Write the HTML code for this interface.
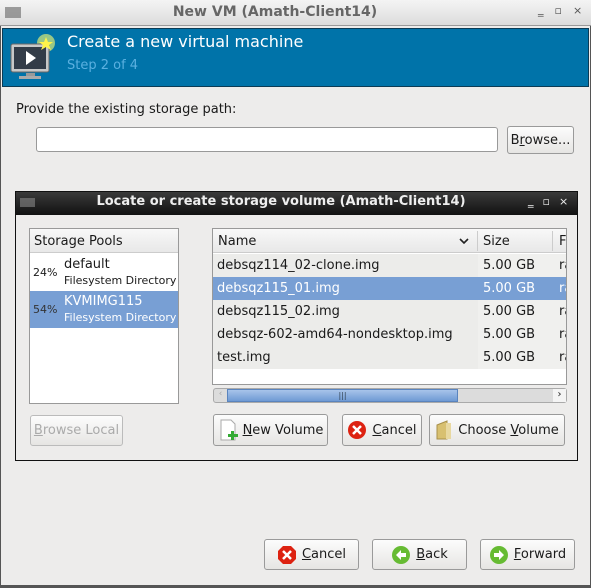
<!DOCTYPE html>
<html><head><meta charset="utf-8"><style>
*{box-sizing:border-box;margin:0;padding:0}
body{width:591px;height:588px;background:#edeceb;font-family:"DejaVu Sans","Liberation Sans",sans-serif;font-size:13px;color:#1a1a1a;position:relative;overflow:hidden}
.a{position:absolute}
.btn{position:absolute;border:1px solid #9a9a9a;border-radius:3px;background:linear-gradient(#fcfcfc,#e6e5e3);display:flex;align-items:center;justify-content:center;gap:5px;font-size:13px}
.btn u{text-decoration:underline}
.row{position:absolute;left:0;right:0;height:23px;line-height:23px}
</style></head><body>
<div class="a" style="left:0;top:0;width:591px;height:588px;border:1px solid #555;border-top:none"></div>
<div class="a" style="left:0;top:0;width:591px;height:26px;background:linear-gradient(#f4f4f4,#dcdcdc);border-bottom:1px solid #999"></div>
<div class="a" style="left:5px;top:7px;width:16px;height:11px;background:#777;opacity:.7"></div>
<div class="a" style="left:0;width:550px;top:4px;text-align:center;font-weight:bold;font-size:14px;color:#666">New VM (Amath-Client14)</div>
<div class="a" style="left:538px;top:4px;font-size:11px;color:#555;letter-spacing:11px">‗▫×</div>
<div class="a" style="left:2px;top:28px;width:587px;height:59px;background:#0073a9;border:1px solid #0b3b55"></div>
<svg class="a" style="left:8px;top:33px" width="48" height="52" viewBox="0 0 48 52">
<circle cx="38" cy="10" r="9" fill="#ffff70" opacity=".6"/>
<rect x="3" y="11" width="38" height="28" rx="2" fill="#c8c8c8" stroke="#666"/>
<rect x="6" y="14" width="32" height="22" fill="#333c48"/>
<path d="M18 18 L28 25 L18 32Z" fill="#fff"/>
<rect x="18" y="40" width="9" height="3" fill="#999"/><rect x="11" y="43" width="22" height="3" fill="#aaa"/>
<path d="M38 4 l2 5 5 0 -4 3 2 5 -5 -3 -5 3 2 -5 -4 -3 5 0z" fill="#fff34a"/>
</svg>
<div class="a" style="left:67px;top:32px;font-size:16px;color:#fff">Create a new virtual machine</div>
<div class="a" style="left:67px;top:58px;font-size:13px;color:#5ab0e0">Step 2 of 4</div>
<div class="a" style="left:16px;top:102px">Provide the existing storage path:</div>
<div class="a" style="left:36px;top:127px;width:462px;height:25px;background:#fff;border:1px solid #999;border-radius:3px"></div>
<div class="btn" style="left:507px;top:126px;width:67px;height:28px"><span>B<u>r</u>owse...</span></div>

<div class="a" style="left:15px;top:191px;width:563px;height:270px;border:1px solid #111;background:#edeceb"></div>
<div class="a" style="left:16px;top:192px;width:561px;height:23px;background:linear-gradient(#3a3a3a,#111)"></div>
<div class="a" style="left:20px;top:198px;width:15px;height:9px;background:#888;opacity:.6"></div>
<div class="a" style="left:16px;width:530px;top:194px;text-align:center;font-weight:bold;font-size:13px;color:#eee">Locate or create storage volume (Amath-Client14)</div>
<div class="a" style="left:528px;top:195px;font-size:11px;color:#eee;letter-spacing:9px">‗▫×</div>

<div class="a" style="left:29px;top:228px;width:150px;height:176px;background:#fff;border:1px solid #999">
 <div class="a" style="left:0;top:0;width:148px;height:24px;background:linear-gradient(#f8f8f8,#e8e8e8);border-bottom:1px solid #ccc;padding:5px 0 0 4px">Storage Pools</div>
 <div class="a" style="left:0;top:25px;width:148px;height:37px">
  <div class="a" style="left:3px;top:12px;font-size:11px">24%</div>
  <div class="a" style="left:34px;top:3px">default</div>
  <div class="a" style="left:34px;top:20px;font-size:11px">Filesystem Directory</div></div>
 <div class="a" style="left:0;top:62px;width:148px;height:37px;background:#789fd4;color:#fff">
  <div class="a" style="left:3px;top:12px;font-size:11px;color:#333">54%</div>
  <div class="a" style="left:34px;top:3px">KVMIMG115</div>
  <div class="a" style="left:34px;top:20px;font-size:11px">Filesystem Directory</div></div>
</div>

<div class="a" style="left:212px;top:228px;width:355px;height:157px;background:#fff;border:1px solid #999;overflow:hidden">
 <div class="a" style="left:0;top:0;width:355px;height:24px;background:linear-gradient(#f8f8f8,#e8e8e8);border-bottom:1px solid #ccc"></div>
 <div class="a" style="left:5px;top:5px">Name</div>
 <svg class="a" style="left:246px;top:8px" width="10" height="8"><path d="M1 2l4 4 4-4" fill="none" stroke="#222" stroke-width="1.6"/></svg>
 <div class="a" style="left:264px;top:2px;width:1px;height:20px;background:#ccc"></div>
 <div class="a" style="left:270px;top:5px">Size</div>
 <div class="a" style="left:339px;top:2px;width:1px;height:20px;background:#ccc"></div>
 <div class="a" style="left:346px;top:5px">F</div>
 <div class="a" style="left:0;top:25px;width:355px;height:115px;background:#f0f0ee"></div>
 <div class="a" style="left:0;top:25px;width:265px;height:115px;background:#ececea"></div>
 <div class="row" style="top:25px"><span class="a" style="left:4px">debsqz114_02-clone.img</span><span class="a" style="left:270px">5.00 GB</span><span class="a" style="left:346px">ra</span></div>
 <div class="row" style="top:48px;background:#789fd4;color:#fff"><span class="a" style="left:4px">debsqz115_01.img</span><span class="a" style="left:270px">5.00 GB</span><span class="a" style="left:346px">ra</span></div>
 <div class="row" style="top:71px"><span class="a" style="left:4px">debsqz115_02.img</span><span class="a" style="left:270px">5.00 GB</span><span class="a" style="left:346px">ra</span></div>
 <div class="row" style="top:94px"><span class="a" style="left:4px">debsqz-602-amd64-nondesktop.img</span><span class="a" style="left:270px">5.00 GB</span><span class="a" style="left:346px">ra</span></div>
 <div class="row" style="top:117px"><span class="a" style="left:4px">test.img</span><span class="a" style="left:270px">5.00 GB</span><span class="a" style="left:346px">ra</span></div>
</div>
<div class="a" style="left:213px;top:388px;width:354px;height:15px;background:#dcdcdc;border:1px solid #aaa;border-radius:3px"></div>
<div class="a" style="left:227px;top:389px;width:231px;height:13px;background:linear-gradient(#a8c4ea,#6f9ad4);border:1px solid #5a84be;text-align:center;font-size:8px;line-height:11px;color:#345">|||</div>
<div class="a" style="left:214px;top:389px;width:13px;height:13px;font-size:9px;color:#aaa;text-align:center">‹</div>
<div class="a" style="left:553px;top:389px;width:13px;height:13px;background:#f4f4f4;font-size:10px;text-align:center;line-height:12px">›</div>

<div class="btn" style="left:30px;top:415px;width:93px;height:31px;color:#aaa;border-color:#bbb"><span><u>B</u>rowse Local</span></div>
<div class="btn" style="left:213px;top:414px;width:115px;height:32px"><svg width="20" height="22"><path d="M3 1h10l4 4v16H3z" fill="#fff" stroke="#aaa"/><rect x="10" y="15" width="10" height="3" fill="#3a3"/><rect x="13" y="12" width="3" height="9" fill="#3a3"/></svg><span><u>N</u>ew Volume</span></div>
<div class="btn" style="left:342px;top:414px;width:80px;height:32px"><svg width="20" height="20"><circle cx="10" cy="10" r="9" fill="#d21"/><path d="M6 6l8 8M14 6l-8 8" stroke="#fff" stroke-width="2.5"/></svg><span><u>C</u>ancel</span></div>
<div class="btn" style="left:429px;top:414px;width:136px;height:32px"><svg width="18" height="22"><path d="M2 6l10-4v18L2 20z" fill="#d8c070" stroke="#a8904a"/><rect x="11" y="4" width="5" height="16" fill="#e8d8a0"/></svg><span>Choose <u>V</u>olume</span></div>

<div class="btn" style="left:264px;top:539px;width:95px;height:31px"><svg width="20" height="20"><path d="M6 1h8l5 5v8l-5 5H6l-5-5V6z" fill="#d21"/><path d="M6 6l8 8M14 6l-8 8" stroke="#fff" stroke-width="2.5"/></svg><span><u>C</u>ancel</span></div>
<div class="btn" style="left:372px;top:539px;width:95px;height:31px"><svg width="20" height="20"><circle cx="10" cy="10" r="9" fill="#6b3"/><path d="M5 10l5-5v3h5v4h-5v3z" fill="#fff"/></svg><span><u>B</u>ack</span></div>
<div class="btn" style="left:480px;top:539px;width:95px;height:31px"><svg width="20" height="20"><circle cx="10" cy="10" r="9" fill="#6b3"/><path d="M15 10l-5-5v3H5v4h5v3z" fill="#fff"/></svg><span><u>F</u>orward</span></div>
<div class="a" style="left:0;top:585px;width:591px;height:3px;background:#555"></div>
</body></html>
